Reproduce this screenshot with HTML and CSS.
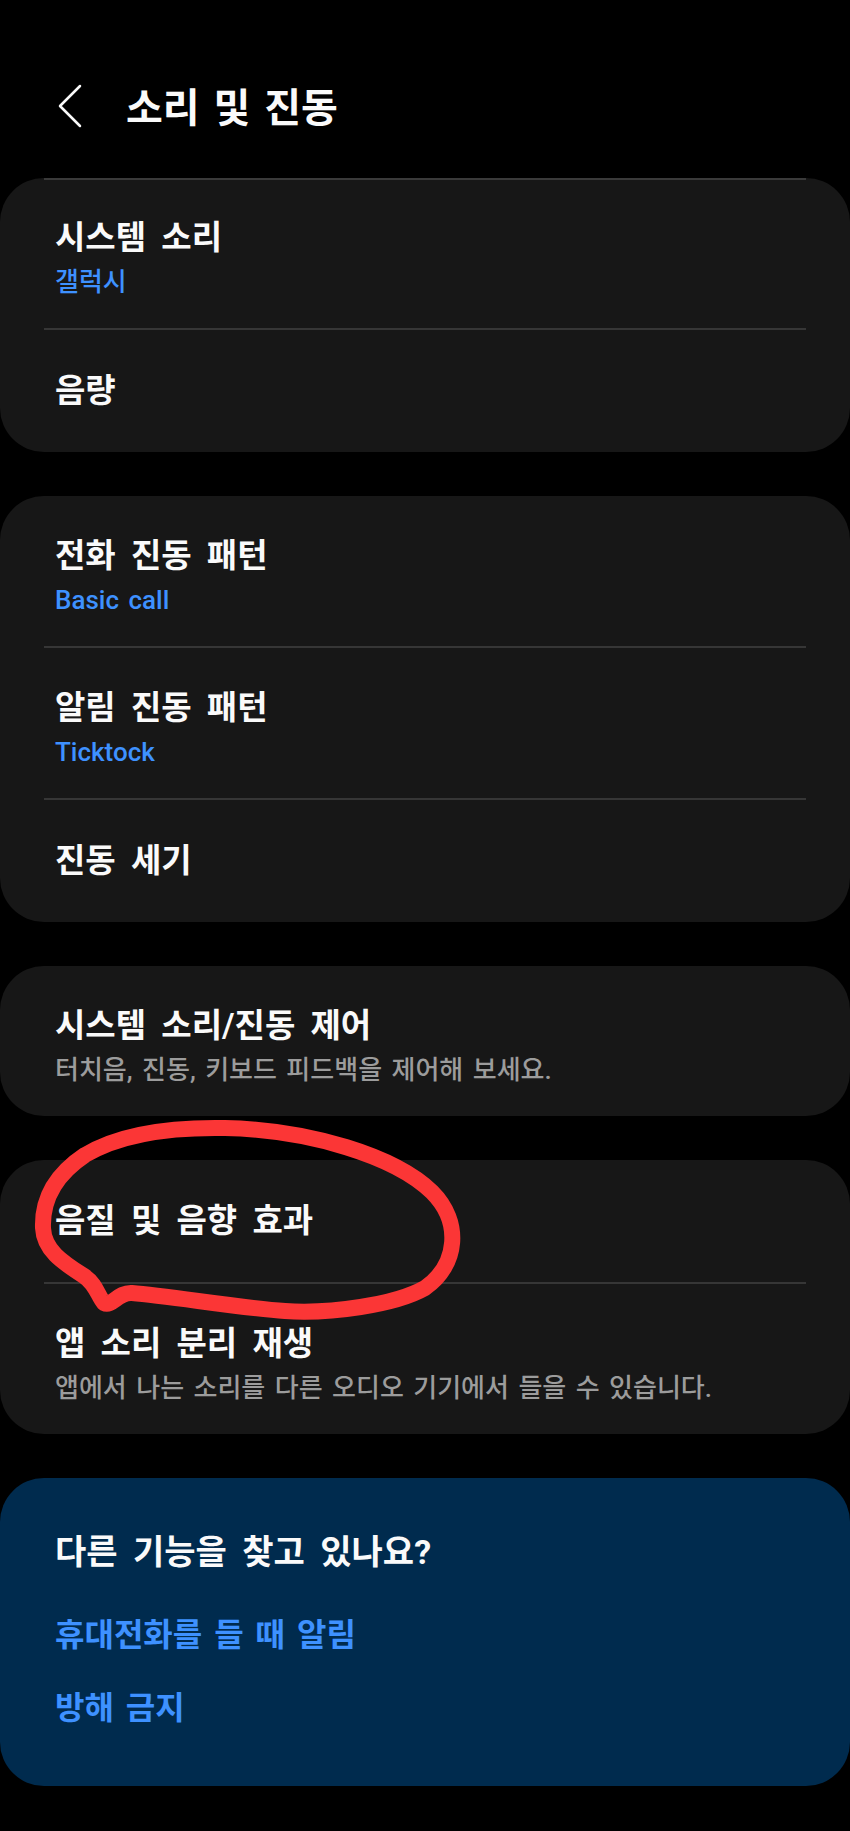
FILE: index.html
```html
<!DOCTYPE html>
<html lang="ko">
<head>
    <meta name="viewport" content="width=device-width, initial-scale=1.0">
    <meta charset="UTF-8">
    <title>소리 및 진동</title>
    <link rel="stylesheet" href="styles.css">
</head>
<body>

<!-- En-tête -->
<header class="top-bar">
    <svg class="back" viewBox="0 0 24 44" width="24" height="44">
        <polyline points="22,2 2,22 22,42" />
    </svg>
    <h1>소리 및 진동</h1>
</header>

<main class="list">
    <section class="card card-first">
        <div class="item two">
            <div class="title">시스템 소리</div>
            <div class="sub accent">갤럭시</div>
        </div>
        <div class="item">
            <div class="title">음량</div>
        </div>
    </section>

    <section class="card">
        <div class="item two">
            <div class="title">전화 진동 패턴</div>
            <div class="sub accent">Basic call</div>
        </div>
        <div class="item two">
            <div class="title">알림 진동 패턴</div>
            <div class="sub accent">Ticktock</div>
        </div>
        <div class="item">
            <div class="title">진동 세기</div>
        </div>
    </section>

    <section class="card">
        <div class="item two">
            <div class="title">시스템 소리/진동 제어</div>
            <div class="sub">터치음, 진동, 키보드 피드백을 제어해 보세요.</div>
        </div>
    </section>

    <section class="card card-marked">
        <div class="item">
            <div class="title">음질 및 음향 효과</div>
        </div>
        <div class="item two">
            <div class="title">앱 소리 분리 재생</div>
            <div class="sub">앱에서 나는 소리를 다른 오디오 기기에서 들을 수 있습니다.</div>
        </div>
        <!-- trait rouge dessiné à la main -->
        <svg class="scribble" viewBox="0 0 480 240" width="480" height="240">
            <path d="M104 203 C98 196 96 184 84 176 C62 162 44 150 43 128 C42 100 55 75 85 55 C120 34 170 27 225 28 C310 30 395 56 432 92 C462 122 458 165 425 188 C395 205 330 214 285 211 C240 208 170 196 132 193 C118 192 112 207 104 203 Z" />
        </svg>
    </section>

    <section class="card suggest">
        <h2>다른 기능을 찾고 있나요?</h2>
        <a href="#">휴대전화를 들 때 알림</a>
        <a href="#">방해 금지</a>
    </section>
</main>

</body>
</html>
```

FILE: styles.css
```css
:root {
    --bg-color: #000;
    --card-bg: #171717;
    --divider: #363636;
    --text-color: #fafafa;
    --sub-color: #9c9c9c;
    --accent: #3e91ff;
    --suggest-bg: #002b4e;
}

body {
    margin: 0;
    width: 850px;
    min-height: 1831px;
    background-color: var(--bg-color);
    color: var(--text-color);
    font-family: "Roboto", "Noto Sans CJK KR", sans-serif;
}

/* Header */
.top-bar {
    display: flex;
    align-items: center;
    height: 50px;
    padding: 84px 0 44px 58px;
}

.back {
    fill: none;
    stroke: var(--text-color);
    stroke-width: 2.5;
    stroke-linecap: round;
    stroke-linejoin: round;
    margin: 0 44px 6px 0;
}

.top-bar h1 {
    margin: 0;
    font-size: 40px;
    font-weight: 700;
    line-height: 50px;
    word-spacing: 4px;
}

/* Cards */
.list {
    display: flex;
    flex-direction: column;
    gap: 44px;
}

.card {
    background-color: var(--card-bg);
    border-radius: 44px;
    padding: 0 44px;
    position: relative;
}

.card-first::before {
    content: "";
    position: absolute;
    top: 0;
    left: 44px;
    right: 44px;
    height: 2px;
    background-color: #3a3a3a;
}

.item {
    padding: 39px 11px;
}

.item.two {
    padding: 38px 11px 30px;
}

.item + .item {
    border-top: 2px solid var(--divider);
}

.title {
    font-size: 33px;
    font-weight: 600;
    line-height: 44px;
    word-spacing: 7px;
}

.sub {
    margin-top: 6px;
    font-size: 26px;
    font-weight: 500;
    line-height: 32px;
    word-spacing: 3px;
    color: var(--sub-color);
}

.sub.accent {
    color: var(--accent);
}

/* Annotation */
.scribble {
    position: absolute;
    left: 0;
    top: -60px;
    overflow: visible;
    pointer-events: none;
}

.scribble path {
    fill: none;
    stroke: #fb3636;
    stroke-width: 16;
    stroke-linecap: round;
    stroke-linejoin: round;
}

/* Suggestions */
.suggest {
    background-color: var(--suggest-bg);
    padding: 52px 55px 56px;
    display: flex;
    flex-direction: column;
    align-items: flex-start;
}

.suggest h2 {
    margin: 0;
    font-size: 34px;
    font-weight: 700;
    line-height: 44px;
    word-spacing: 7px;
}

.suggest a {
    margin-top: 29px;
    font-size: 32px;
    font-weight: 700;
    line-height: 44px;
    word-spacing: 4px;
    color: var(--accent);
    text-decoration: none;
}

.suggest h2 + a {
    margin-top: 39px;
}
```
